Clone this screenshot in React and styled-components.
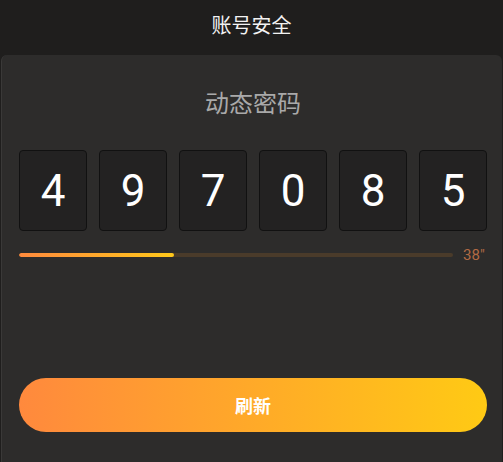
import React from 'react';
import styled, { createGlobalStyle } from 'styled-components';

const GlobalStyle = createGlobalStyle`
  html, body {
    margin: 0;
    padding: 0;
    background: #1f1e1d;
  }
  * {
    box-sizing: border-box;
  }
`;

const Page = styled.div`
  width: 503px;
  height: 462px;
  display: flex;
  flex-direction: column;
  background: #1f1e1d;
  font-family: 'Noto Sans CJK SC', 'Noto Sans', sans-serif;
  overflow: hidden;
`;

const TopBar = styled.header`
  height: 55px;
  display: flex;
  align-items: center;
  justify-content: center;
  padding-bottom: 6px;
  color: #f2f2f2;
  font-size: 20px;
`;

const Card = styled.main`
  flex: 1;
  margin: 0 1px;
  display: flex;
  flex-direction: column;
  padding: 0 15px 0 17px;
  background: #2d2c2b;
  border-radius: 6px 6px 0 0;
  border-left: 1px solid #3a3938;
`;

const Title = styled.h2`
  margin: 26px 0 0;
  height: 41px;
  text-align: center;
  font-weight: 400;
  font-size: 24px;
  line-height: 41px;
  color: #a9a9a9;
`;

const Digits = styled.div`
  display: grid;
  grid-template-columns: repeat(6, 68px);
  gap: 12px;
  margin-top: 28px;
`;

const Digit = styled.div`
  height: 81px;
  display: flex;
  align-items: center;
  justify-content: center;
  background: #232222;
  border: 1px solid #111;
  border-radius: 4px;
  color: #fff;
  font-family: Roboto, 'Liberation Sans', sans-serif;
  font-size: 44px;
`;

const TimerRow = styled.div`
  display: flex;
  align-items: center;
  gap: 10px;
  margin-top: 15px;
`;

const Track = styled.div`
  flex: 1;
  height: 4px;
  border-radius: 2px;
  background: #4a3b2a;
  overflow: hidden;
`;

const Fill = styled.div`
  height: 100%;
  border-radius: 2px;
  background: linear-gradient(90deg, #ff8a3d, #ffc81a);
`;

const Seconds = styled.span`
  width: 24px;
  color: #b26a44;
  font-family: Roboto, 'Liberation Sans', sans-serif;
  font-size: 15px;
`;

const RefreshButton = styled.button`
  margin-top: 114px;
  height: 54px;
  border: none;
  border-radius: 27px;
  background: linear-gradient(90deg, #ff893d, #ffca14);
  color: #fff;
  font-family: 'Noto Sans CJK SC', sans-serif;
  font-weight: 700;
  font-size: 18px;
`;

const code = ['4', '9', '7', '0', '8', '5'];
const remaining = 38;
const total = 60;

const App = () => {
  const progress = ((total - remaining) / total) * 97.5;
  return (
    <>
      <GlobalStyle />
      <Page>
        <TopBar>账号安全</TopBar>
        <Card>
          <Title>动态密码</Title>
          <Digits>
            {code.map((d, i) => (
              <Digit key={i}>{d}</Digit>
            ))}
          </Digits>
          <TimerRow>
            <Track>
              <Fill style={{ width: `${progress}%` }} />
            </Track>
            <Seconds>{remaining}″</Seconds>
          </TimerRow>
          <RefreshButton>刷新</RefreshButton>
        </Card>
      </Page>
    </>
  );
};

export default App;
